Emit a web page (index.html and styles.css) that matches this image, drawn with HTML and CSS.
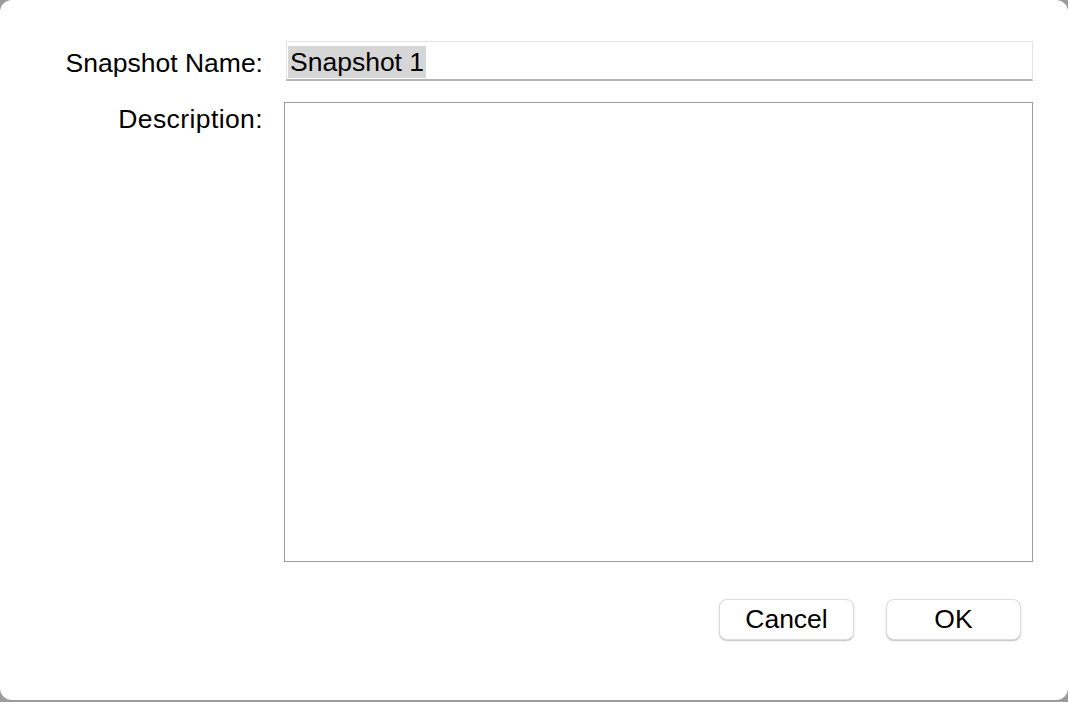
FILE: index.html
```html
<!DOCTYPE html>
<html>
<head>
<meta charset="utf-8">
<link rel="stylesheet" href="styles.css">
</head>
<body>
<div class="dialog">
  <div class="form">
    <div class="label name-label">Snapshot Name:</div>
    <div class="field-input"><span class="selected">Snapshot 1</span></div>
    <div class="label desc-label">Description:</div>
    <div class="field-area"></div>
  </div>
  <div class="buttons">
    <div class="btn">Cancel</div>
    <div class="btn">OK</div>
  </div>
</div>
</body>
</html>
```
FILE: styles.css
```css
html, body {
  margin: 0;
  padding: 0;
}
body {
  width: 1068px;
  height: 702px;
  background: #9c9c9c;
  font-family: "Liberation Sans", Arial, sans-serif;
  color: #000;
  overflow: hidden;
}
.dialog {
  box-sizing: border-box;
  width: 1068px;
  height: 700px;
  background: #fff;
  border-radius: 12px;
  padding: 41px 35px 0 0;
  display: flex;
  flex-direction: column;
}
.form {
  display: grid;
  grid-template-columns: 263px 1fr;
  column-gap: 21px;
  row-gap: 21px;
  grid-template-rows: 40px 460px;
}
.label {
  font-size: 26.5px;
  line-height: 32px;
  text-align: right;
}
.name-label {
  align-self: center;
  padding-top: 4px;
}
.desc-label {
  padding-top: 1px;
  letter-spacing: 0.4px;
}
.field-input {
  box-sizing: border-box;
  margin-left: 2px;
  border: 1px solid #e3e3e3;
  border-bottom: 2px solid #b4b4b4;
  display: flex;
  align-items: center;
  padding: 2px 0 0 1px;
}
.selected {
  background: #d6d6d6;
  font-size: 26.5px;
  line-height: 32px;
  padding: 0 2px;
}
.field-area {
  box-sizing: border-box;
  border: 1px solid #9e9e9e;
}
.buttons {
  display: flex;
  justify-content: flex-end;
  gap: 32px;
  margin-top: 37px;
  padding-right: 12px;
}
.btn {
  box-sizing: border-box;
  width: 135px;
  height: 41px;
  border-radius: 8px;
  border: 1px solid #dcdcdc;
  box-shadow: 0 1px 1.5px rgba(0, 0, 0, 0.25);
  background: #fff;
  font-size: 26.5px;
  line-height: 38px;
  text-align: center;
}
```
